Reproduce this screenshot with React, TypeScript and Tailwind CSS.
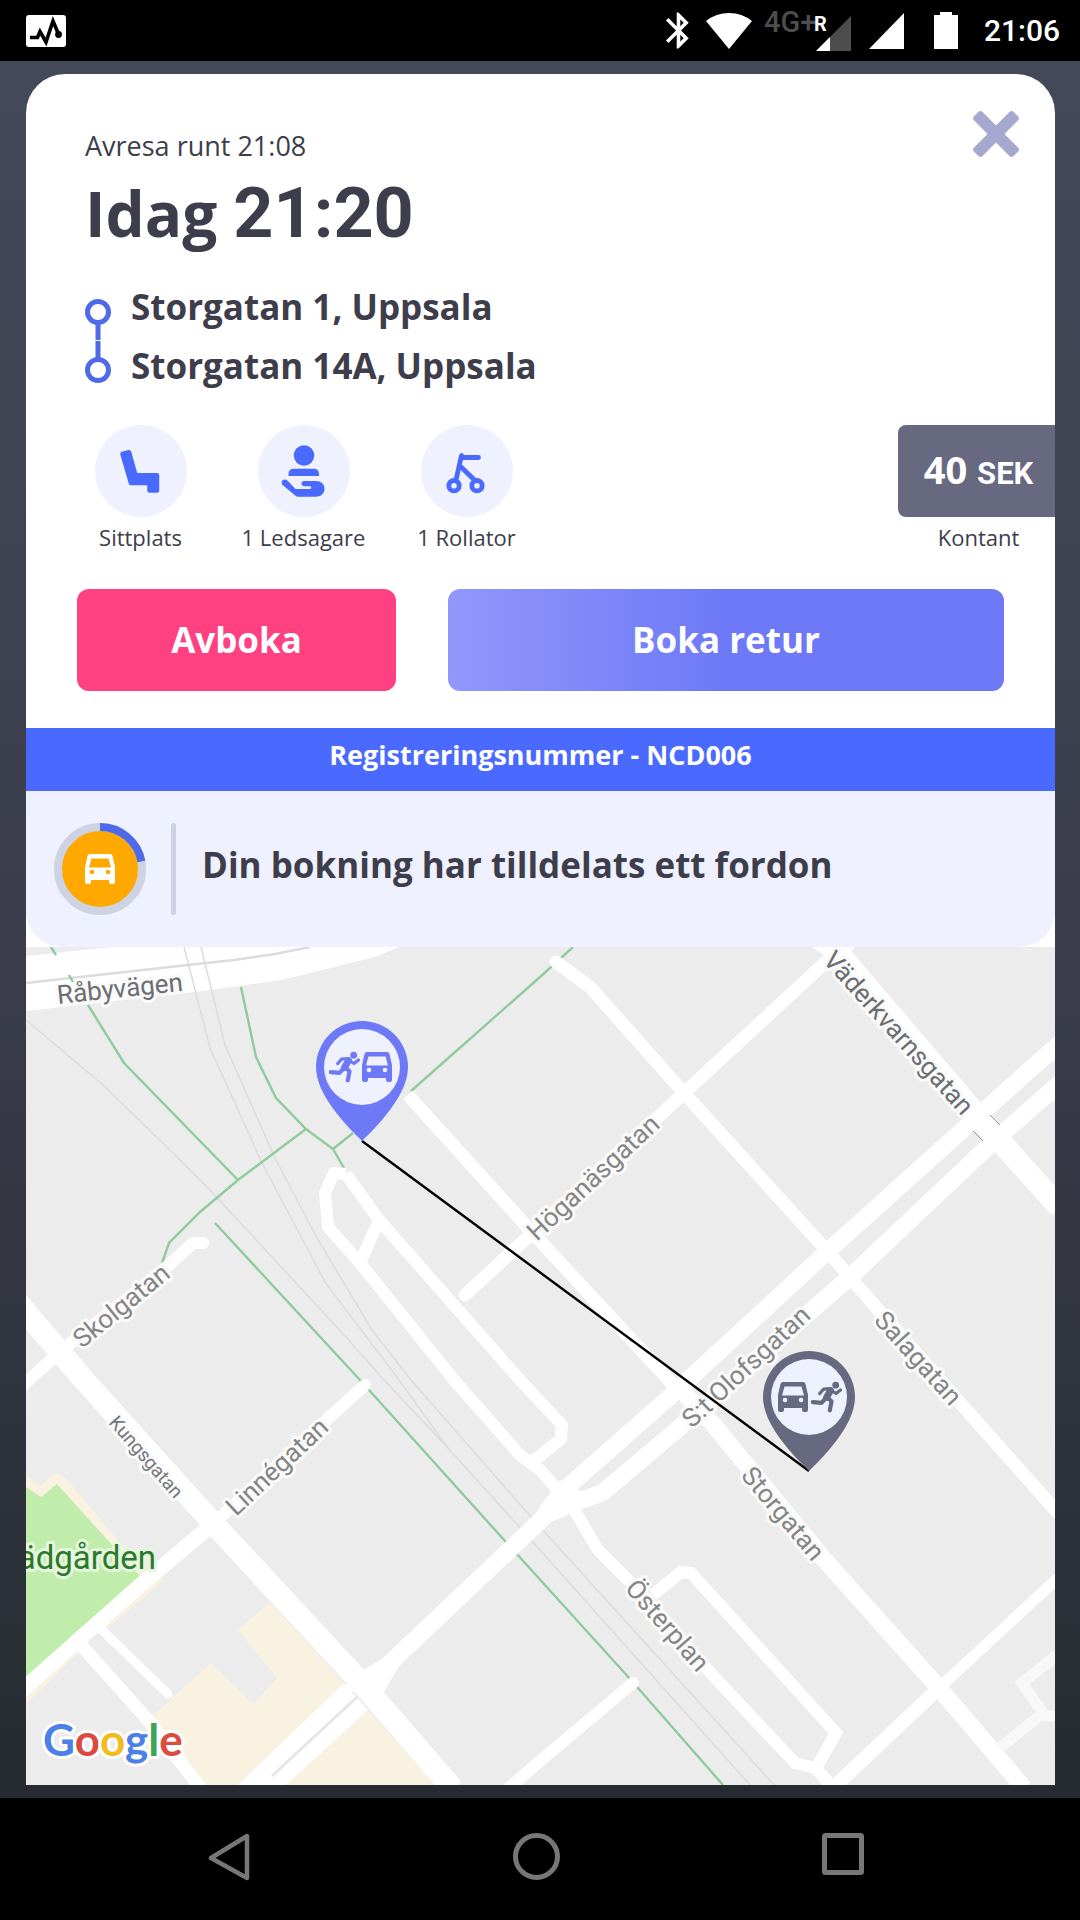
import React from 'react';
import { MdBluetooth } from 'react-icons/md';

const CarShape = () => (
  <path
    fillRule="evenodd"
    d="M5 0H25Q27 0 27.5 2L30 13V28Q30 30 28 30H26Q24 30 24 28V26H6V28Q6 30 4 30H2Q0 30 0 28V13L2.5 2Q3 0 5 0ZM6.5 4.5L4 13.5H26L23.5 4.5ZM7 15.7A2.3 2.3 0 1 0 7 20.3A2.3 2.3 0 1 0 7 15.7ZM23 15.7A2.3 2.3 0 1 0 23 20.3A2.3 2.3 0 1 0 23 15.7Z"
  />
);

const RunnerShape = ({ color }: { color: string }) => (
  <g fill="none" stroke={color} strokeLinecap="round" strokeLinejoin="round">
    <circle cx="24.7" cy="3.2" r="3.4" fill={color} stroke="none" />
    <path d="M8.7 11.5L12.5 7.2L19.5 6.6" strokeWidth="3.2" />
    <path d="M20.5 8.5L25 11.5L29.5 8" strokeWidth="3.2" />
    <path d="M19.5 8.5L15.5 15.5" strokeWidth="6.8" />
    <path d="M15.8 15L20.5 19.3L18.8 28.3" strokeWidth="4.2" />
    <path d="M14 17L10.5 20.8L1.8 20.2" strokeWidth="4.2" />
  </g>
);

const Pin = ({ x, y, color, carFirst }: { x: number; y: number; color: string; carFirst?: boolean }) => (
  <g transform={`translate(${x} ${y})`}>
    <path d="M0 0C-16 -16 -46 -46 -46 -74A46 46 0 0 1 46 -74C46 -46 16 -16 0 0Z" fill={color} />
    <circle cx="0" cy="-74" r="38" fill="#eff1ff" />
    <g transform={carFirst ? 'translate(-31 -89)' : 'translate(0 -89)'} fill={color}>
      <CarShape />
    </g>
    <g transform={carFirst ? 'translate(2 -89)' : 'translate(-33 -89)'}>
      <RunnerShape color={color} />
    </g>
  </g>
);

const StatusBar = () => (
  <header className="flex h-[61px] items-center bg-black pl-[26px] pr-5 text-white">
    <svg width="40" height="32" viewBox="0 0 40 32">
      <rect width="40" height="32" rx="3" fill="#fff" />
      <path d="M4 22.5H11.5L14 16.5L20 27L27 6L32.5 19" fill="none" stroke="#000" strokeWidth="3.6" />
      <circle cx="32.5" cy="19.5" r="3.4" />
    </svg>
    <div className="ml-auto flex items-center">
      <MdBluetooth size={43} />
      <svg className="ml-1.5" width="46" height="36" viewBox="0 0 46 36">
        <path d="M0 8Q10 0 23 0T46 8L23 36Z" fill="#fff" />
      </svg>
      <svg className="ml-3 overflow-visible" width="87" height="40" viewBox="0 0 87 40">
        <text x="0" y="21" fontSize="29" fontWeight="500" fill="#4d4d4d" className="font-[Roboto,sans-serif]">4G+</text>
        <path d="M87 5V40H52Z" fill="#4d4d4d" />
        <path d="M66 26V40H52Z" fill="#fff" />
        <text x="50" y="20" fontSize="20" fontWeight="700" fill="#fff" className="font-[Roboto,sans-serif]">R</text>
      </svg>
      <svg className="ml-[18px]" width="35" height="36" viewBox="0 0 35 36">
        <path d="M35 0V36H0Z" fill="#fff" />
      </svg>
      <svg className="ml-[30px]" width="24" height="37" viewBox="0 0 24 37">
        <path d="M6 0H18V3H24V37H0V3H6Z" fill="#fff" />
      </svg>
      <time className="ml-[26px] font-[Roboto,sans-serif] text-[30px] leading-9 font-medium">21:06</time>
    </div>
  </header>
);

const SeatIcon = () => (
  <svg width="92" height="92" viewBox="0 0 92 92">
    <path d="M27.5 29L34 27.2L40.5 50.2H62V65.5H54.5V58H36Z" fill="#4a6aff" stroke="#4a6aff" strokeWidth="4.5" strokeLinejoin="round" />
  </svg>
);

const CompanionIcon = () => (
  <svg width="92" height="92" viewBox="0 0 92 92" fill="#4a6aff">
    <circle cx="46" cy="30.5" r="10.3" />
    <path d="M30.5 51V49Q30.5 43.7 36 43.7H55.5Q61 43.7 61 49V51Z" />
    <path d="M46 56H58C63 56 66.5 59 66.5 63.8S63 71.7 58 71.7H40Q38.5 71.7 37.5 70.7L24 59.5Q22.5 57.5 24.5 55.2Q27 53.5 29.5 55.5L37.5 64H52.5Q54 62.8 52.5 61.2H46Q43.4 60.8 43.4 58.6Q43.4 56.2 46 56Z" />
  </svg>
);

const WalkerIcon = () => (
  <svg width="92" height="92" viewBox="0 0 92 92" fill="none" stroke="#4a6aff" strokeWidth="4.8" strokeLinecap="round" strokeLinejoin="round">
    <path d="M57.5 32.5H41L40.5 30.5L35 55" />
    <path d="M39 41L54 55.5" />
    <circle cx="33" cy="60.7" r="5.2" />
    <circle cx="56" cy="60.7" r="5.2" />
  </svg>
);

const extras = [
  { label: 'Sittplats', Icon: SeatIcon },
  { label: '1 Ledsagare', Icon: CompanionIcon },
  { label: '1 Rollator', Icon: WalkerIcon },
];

const labels = [
  { text: 'Råbyvägen', x: 58, y: 1004, rotate: -6, size: 26, fill: '#6a6e72' },
  { text: 'Väderkvarnsgatan', x: 822, y: 961, rotate: 48, size: 26, fill: '#6a6e72' },
  { text: 'Höganäsgatan', x: 537, y: 1242, rotate: -43, size: 26, fill: '#858585' },
  { text: 'S:t Olofsgatan', x: 692, y: 1429, rotate: -43, size: 26, fill: '#858585' },
  { text: 'Salagatan', x: 873, y: 1321, rotate: 48, size: 26, fill: '#858585' },
  { text: 'Storgatan', x: 740, y: 1476, rotate: 50, size: 26, fill: '#858585' },
  { text: 'Österplan', x: 624, y: 1589, rotate: 49, size: 26, fill: '#858585' },
  { text: 'Linnégatan', x: 236, y: 1517, rotate: -43, size: 26, fill: '#858585' },
  { text: 'Skolgatan', x: 82, y: 1349, rotate: -39, size: 26, fill: '#858585' },
  { text: 'Kungsgatan', x: 108, y: 1423, rotate: 49, size: 19, fill: '#73777b' },
];

const TripMap = () => (
  <svg
    className="block min-h-0 w-full flex-1"
    viewBox="26 947 1029 838"
    preserveAspectRatio="xMidYMid slice"
    role="img"
    aria-label="Karta"
  >
    <rect x="26" y="947" width="1030" height="840" fill="#ececec" />

    {/* Blocks and park */}
    <g fill="#faf2e1">
      <path d="M26 1475L41 1486L55 1473L65 1477L145 1573L135 1590H26Z" />
      <path d="M270 1602L238 1630L277 1678L253 1704L211 1663L151 1717L207 1785H238L344 1683Z" />
      <path d="M368 1710L286 1785H436Z" />
      <path d="M164 1580L104 1631L98 1626L158 1574Z" />
      <path d="M88 1644L26 1704V1694L80 1640Z" />
    </g>
    <path d="M26 1487L41 1497L57 1484L141 1577L26 1680Z" fill="#c0edab" />

    {/* Main street in the north west */}
    <path d="M26 956L113 947H399L375 957L282 980L203 991L26 1011Z" fill="#fff" />

    {/* Railway */}
    <g fill="none" stroke="#dcdcdc" strokeWidth="1.5">
      <path d="M26 983L188 965L234 960L275 954L310 947" strokeWidth="2.4" />
      <path d="M184 947L210 1048L262 1163L325 1282L399 1380L448 1448" />
      <path d="M201 947L225 1045L275 1158L317 1238L372 1330L411 1380L540 1527L774 1785" />
      <path d="M26 1020L103 1085L176 1156L210 1190L345 1336L384 1380L448 1448L540 1550L750 1785" />
    </g>

    {/* Foot paths */}
    <g fill="none" stroke="#90cb9b" strokeWidth="2.4">
      <path d="M51 947L56 955M69 975L73 982M88 1005L124 1063L238 1180" />
      <path d="M241 987L256 1057L276 1098L306 1129L333 1149L344 1168" />
      <path d="M306 1129L238 1180L200 1212L169 1243L162 1263" />
      <path d="M333 1149L353 1133" />
      <path d="M215 1223L360 1380L505 1541L631 1680L723 1785" />
      <path d="M411 1091L540 977L573 947" />
    </g>

    <g fill="none" stroke="#f8f8f8" strokeWidth="11">
      <path d="M1057 1655L1022 1683L1043 1713L1001 1747M1043 1716H1057" />
    </g>

    {/* Streets */}
    <g fill="none" stroke="#fff" strokeLinejoin="round">
      <path d="M346 1174L334 1173L325 1193L328 1227L360 1263L454 1380L519 1454L540 1470L561 1493" strokeWidth="12" />
      <path d="M346 1174L379 1220L520 1380L562 1425L561 1439L532 1462M379 1220L360 1263" strokeWidth="12" />
      <path d="M408 1095L530 1230L678 1390" strokeWidth="13" />
      <path d="M678 1387L712 1423L822 1557L939 1688L1024 1788" strokeWidth="17" />
      <path d="M465 1295L684 1093L828 960" strokeWidth="13" strokeLinecap="round" />
      <path d="M556 962L590 987L684 1093L829 1253L881 1313L962 1405L1058 1513" strokeWidth="13" strokeLinecap="round" />
      <path d="M824 936L981 1120L1060 1208" strokeWidth="22" />
      <path d="M1060 1043L977 1117L829 1250L674 1393L555 1498" strokeWidth="17" />
      <path d="M1060 1083L994 1141L850 1277L812 1310L685 1423L602 1493L574 1503L546 1515" strokeWidth="17" />
      <path d="M560 1498L540 1521L389 1664L361 1690" strokeWidth="17" />
      <path d="M18 1303L84 1380L213 1523L365 1687L453 1789" strokeWidth="22" />
      <path d="M203 1243H193L169 1265L62 1350L20 1388" strokeWidth="12" strokeLinecap="round" />
      <path d="M365 1385L310 1435L213 1524" strokeWidth="12" strokeLinecap="round" />
      <path d="M213 1524L138 1587L20 1692" strokeWidth="15" />
      <path d="M100 1628L168 1694" strokeWidth="9" strokeLinecap="round" />
      <path d="M81 1645L148 1720L202 1790" strokeWidth="13" />
      <path d="M572 1506L598 1550L640 1592L705 1667L795 1763L815 1768L833 1787" strokeWidth="12" />
      <path d="M653 1595L681 1572L691 1573L836 1733L815 1770" strokeWidth="12" strokeLinejoin="miter" />
      <path d="M1058 1578L939 1688" strokeWidth="11" />
      <path d="M939 1688L833 1788" strokeWidth="14" />
      <path d="M633 1683L540 1761L508 1789" strokeWidth="12" strokeLinecap="round" />
    </g>
    <g fill="#fff">
      <path d="M344 1683L238 1785H286L368 1710Z" />
      <path d="M389 1655L362 1671L340 1690L382 1695L398 1668Z" />
      <path d="M812 947H855L838 965Z" />
      <path d="M540 1506L560 1480L590 1496L555 1520Z" />
    </g>
    <path d="M357 1697L272 1776" stroke="#e6e6e6" strokeWidth="3" />
    <path d="M990 1115L1000 1125M973 1131L983 1141" stroke="#9a9a9a" strokeWidth="1" />

    {/* Street names */}
    <g className="font-[Roboto,sans-serif]" stroke="#fafafa" strokeWidth="6" strokeLinejoin="round" paintOrder="stroke">
      {labels.map(({ text, x, y, rotate, size, fill }) => (
        <text key={text} fontSize={size} fill={fill} transform={`translate(${x} ${y}) rotate(${rotate})`}>
          {text}
        </text>
      ))}
      <text x="156" y="1569" fontSize="33" textAnchor="end" fill="#2b7a2b" stroke="#e6f6de">
        ädgården
      </text>
    </g>

    <path d="M362 1141L809 1471" stroke="#000" strokeWidth="2.4" />
    <Pin x={362} y={1141} color="#6e79f7" />
    <Pin x={809} y={1471} color="#666980" carFirst />

    <text x="43" y="1756" fontSize="44" fontWeight="700" stroke="#fff" strokeWidth="6" strokeLinejoin="round" paintOrder="stroke" className="font-[Lato,sans-serif]">
      <tspan fill="#4a80e8">G</tspan>
      <tspan fill="#d94b40">o</tspan>
      <tspan fill="#f2bb1d">o</tspan>
      <tspan fill="#4a80e8">g</tspan>
      <tspan fill="#3fa35c">l</tspan>
      <tspan fill="#dd4a3e">e</tspan>
    </text>
  </svg>
);

const NavBar = () => (
  <nav className="flex h-[122px] items-center justify-center gap-[260px] bg-black pr-2 pb-1">
    <button aria-label="Tillbaka">
      <svg width="48" height="48" viewBox="0 0 48 48" fill="none" stroke="#777" strokeWidth="4.5" strokeLinejoin="round">
        <path d="M43 3V45L7 25Z" />
      </svg>
    </button>
    <button aria-label="Hem">
      <svg width="48" height="48" viewBox="0 0 48 48" fill="none" stroke="#777" strokeWidth="5">
        <circle cx="24.5" cy="23.5" r="21" />
      </svg>
    </button>
    <button aria-label="Översikt">
      <svg width="48" height="48" viewBox="0 0 48 48" fill="none" stroke="#777" strokeWidth="5">
        <rect x="4.5" y="2.5" width="37" height="37" rx="1" />
      </svg>
    </button>
  </nav>
);

const App = () => {
  return (
    <div className="flex min-h-screen flex-col font-['Open_Sans',sans-serif] text-[#3d3d4b]">
      <StatusBar />

      <main className="flex flex-1 flex-col bg-linear-to-b from-[#444959] via-[#3b3d4b] to-[#262b31] py-[13px] pr-[25px] pl-[26px]">
        <div className="flex flex-1 flex-col overflow-hidden rounded-t-[39px] bg-white">
          <section className="relative pt-[57px] pb-[37px]">
            <button aria-label="Stäng" className="absolute top-[37px] right-9">
              <svg width="46" height="46" viewBox="-23 -23 46 46" fill="#a6a9cf">
                <rect x="-28" y="-6" width="56" height="12" rx="3" transform="rotate(45)" />
                <rect x="-28" y="-6" width="56" height="12" rx="3" transform="rotate(-45)" />
              </svg>
            </button>

            <div className="px-[59px]">
              <p className="text-[27px] leading-[30px]">Avresa runt 21:08</p>
              <h1 className="mt-3 text-[62px] leading-[80px] font-bold">
                Idag <span className="font-[Roboto,sans-serif] text-[70px]">21:20</span>
              </h1>
              <div className="mt-6 flex gap-5">
                <svg width="26" height="118" viewBox="0 0 26 118" fill="none" stroke="#4f6ae8" strokeWidth="5">
                  <circle cx="13" cy="35" r="10.5" />
                  <path d="M13 46V63M13 64V83" />
                  <circle cx="13" cy="93" r="10.5" />
                </svg>
                <div className="text-[35px] leading-[59px] font-bold">
                  <p>Storgatan 1, Uppsala</p>
                  <p>Storgatan 14A, Uppsala</p>
                </div>
              </div>
            </div>

            <div className="mt-[30px] flex items-start justify-between pl-[33px] text-[22px] leading-[30px]">
              <ul className="flex">
                {extras.map(({ label, Icon }) => (
                  <li key={label} className="flex w-[163px] flex-col items-center">
                    <div className="rounded-full bg-[#eff1ff]">
                      <Icon />
                    </div>
                    <span className="mt-[5px]">{label}</span>
                  </li>
                ))}
              </ul>
              <div className="flex w-[157px] flex-col items-center">
                <div className="flex h-[92px] w-full items-center justify-center rounded-l-lg bg-[#666980] pl-1 font-bold text-white">
                  <p className="text-[38px]">
                    40 <span className="font-[Roboto,sans-serif] text-[31px]">SEK</span>
                  </p>
                </div>
                <span className="mt-[5px] pl-1">Kontant</span>
              </div>
            </div>

            <div className="mt-[37px] flex gap-[52px] px-[51px] text-[35px] font-bold text-white">
              <button className="h-[102px] flex-[319] rounded-xl bg-[#ff4181]">Avboka</button>
              <button className="h-[102px] flex-[556] rounded-xl bg-linear-to-r from-[#9297fb] to-[#6e79f7] to-50%">
                Boka retur
              </button>
            </div>
          </section>

          <p className="flex h-[63px] items-center justify-center bg-[#4a6aff] pb-2 text-[27px] font-bold text-white">
            Registreringsnummer - NCD006
          </p>

          <section className="flex h-[156px] items-center rounded-b-[36px] bg-[#eff1ff] pl-7">
            <svg width="92" height="92" viewBox="0 0 92 92">
              <circle cx="46" cy="46" r="42" fill="#ffa800" stroke="#ced3e3" strokeWidth="8" />
              <path d="M46 4A42 42 0 0 1 87.4 38.5" fill="none" stroke="#4f6ae8" strokeWidth="8" />
              <g transform="translate(31 31)" fill="#fff">
                <CarShape />
              </g>
            </svg>
            <div className="ml-[25px] h-[92px] w-[5px] rounded-full bg-[#ced3e3]" />
            <h2 className="ml-[26px] pb-2 text-[35px] font-bold">Din bokning har tilldelats ett fordon</h2>
          </section>

          <TripMap />
        </div>
      </main>

      <NavBar />
    </div>
  );
};

export default App;
